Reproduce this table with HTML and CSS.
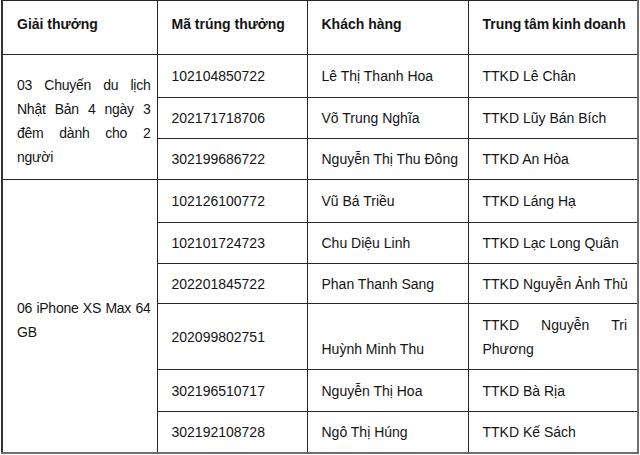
FILE: index.html
```html
<!DOCTYPE html>
<html lang="vi">
<head>
<meta charset="utf-8">
<title>Danh sách trúng thưởng</title>
<link rel="stylesheet" href="styles.css">
</head>
<body>
<div class="page">
<table class="prizes">
  <colgroup>
    <col class="c-prize">
    <col class="c-code">
    <col class="c-name">
    <col class="c-center">
  </colgroup>
  <thead>
    <tr class="r-head">
      <th>Giải thưởng</th>
      <th>Mã trúng thưởng</th>
      <th>Khách hàng</th>
      <th class="tight">Trung tâm kinh doanh</th>
    </tr>
  </thead>
  <tbody>
    <tr class="r43">
      <td rowspan="3" class="prize"><p class="just">03 Chuyến du lịch Nhật Bản 4 ngày 3 đêm dành cho 2 người</p></td>
      <td>102104850722</td>
      <td>Lê Thị Thanh Hoa</td>
      <td>TTKD Lê Chân</td>
    </tr>
    <tr class="r41">
      <td>202171718706</td>
      <td>Võ Trung Nghĩa</td>
      <td>TTKD Lũy Bán Bích</td>
    </tr>
    <tr class="r41">
      <td>302199686722</td>
      <td>Nguyễn Thị Thu Đông</td>
      <td>TTKD An Hòa</td>
    </tr>
    <tr class="r43">
      <td rowspan="6" class="prize"><p class="just">06 iPhone XS Max 64 GB</p></td>
      <td>102126100772</td>
      <td>Vũ Bá Triều</td>
      <td>TTKD Láng Hạ</td>
    </tr>
    <tr class="r41">
      <td>102101724723</td>
      <td>Chu Diệu Linh</td>
      <td>TTKD Lạc Long Quân</td>
    </tr>
    <tr class="r40">
      <td>202201845722</td>
      <td>Phan Thanh Sang</td>
      <td>TTKD Nguyễn Ảnh Thủ</td>
    </tr>
    <tr class="r66">
      <td>202099802751</td>
      <td><span class="low">Huỳnh Minh Thu</span></td>
      <td><p class="just">TTKD Nguyễn Tri Phương</p></td>
    </tr>
    <tr class="r42">
      <td>302196510717</td>
      <td>Nguyễn Thị Hoa</td>
      <td>TTKD Bà Rịa</td>
    </tr>
    <tr class="r41">
      <td>302192108728</td>
      <td>Ngô Thị Húng</td>
      <td>TTKD Kế Sách</td>
    </tr>
  </tbody>
</table>
</div>
</body>
</html>
```
FILE: styles.css
```css
html, body {
  margin: 0;
  padding: 0;
  background: #ffffff;
}
.page {
  padding: 0 0 0 1px;
  width: 640px;
  height: 455px;
  box-sizing: border-box;
}
.prizes {
  border-collapse: collapse;
  table-layout: fixed;
  width: 636px;
  font-family: "Liberation Sans", Arial, sans-serif;
  font-size: 14px;
  line-height: 24px;
  color: #141414;
  border-top: 1px solid #555;
  border-left: 2px solid #333;
  border-right: 2px solid #6d6d6d;
  border-bottom: 2px solid #6d6d6d;
}
.c-prize { width: 155px; }
.c-code { width: 150px; }
.c-name { width: 161px; }
.c-center { width: 170px; }
.prizes th,
.prizes td {
  border: 1px solid #262626;
  padding: 0 10px 0 14px;
  text-align: left;
  vertical-align: middle;
  overflow: hidden;
  white-space: nowrap;
}
.prizes th {
  font-weight: bold;
  vertical-align: top;
  padding-top: 11px;
}
.prizes td.prize {
  white-space: normal;
  padding-right: 6px;
  padding-top: 8px;
  letter-spacing: -0.25px;
}
.tight { word-spacing: -1px; }
.r-head { height: 54px; }
.r40 { height: 40px; }
.r41 { height: 41px; }
.r42 { height: 42px; }
.r43 { height: 43px; }
.r66 { height: 66px; }
.just {
  margin: 0;
  white-space: normal;
  text-align: justify;
  text-align-last: left;
}
.low {
  display: inline-block;
  padding-top: 24px;
}
```
